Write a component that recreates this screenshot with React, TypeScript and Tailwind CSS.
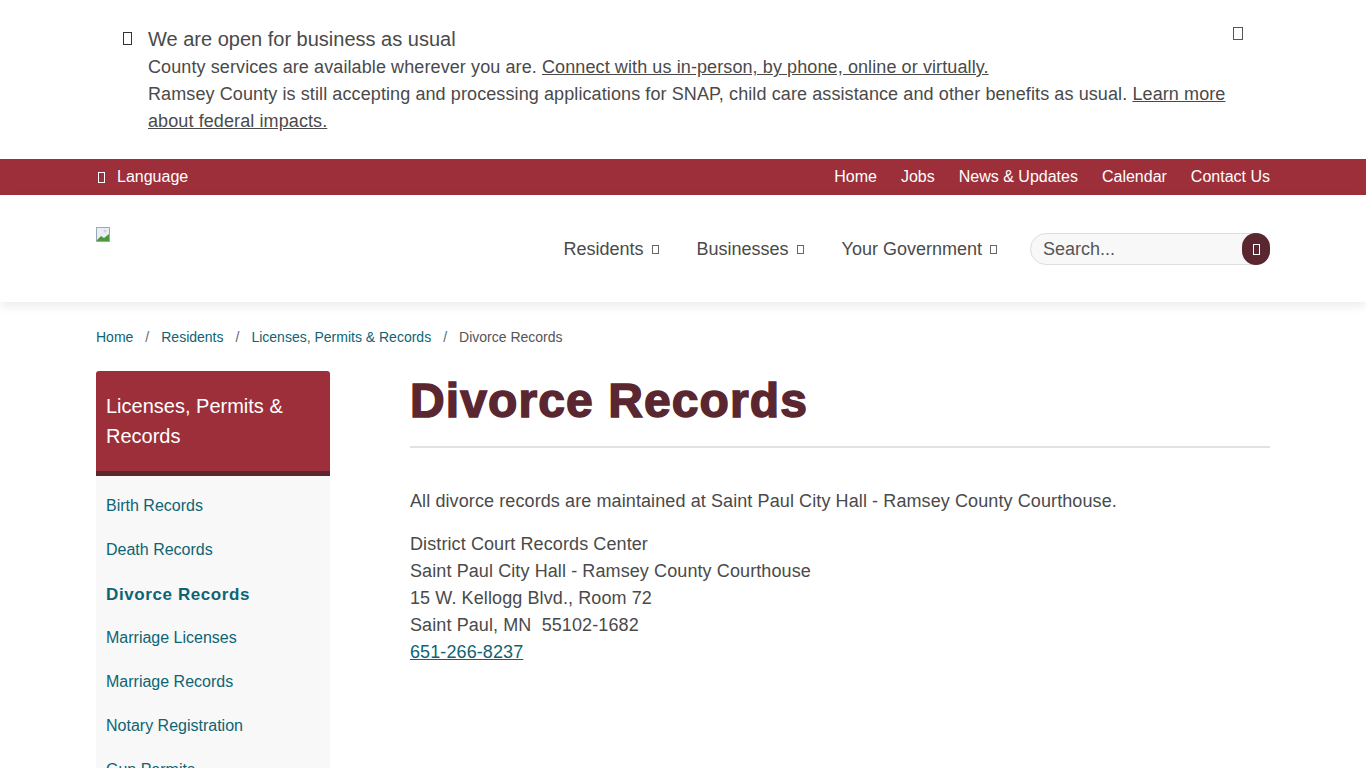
import React from "react";

const Tofu = ({ className = "" }: { className?: string }) => (
  <span className={`inline-block border border-current ${className}`} />
);

const utilLinks = ["Home", "Jobs", "News & Updates", "Calendar", "Contact Us"];
const mainNav = ["Residents", "Businesses", "Your Government"];
const sideLinks = [
  "Birth Records",
  "Death Records",
  "Divorce Records",
  "Marriage Licenses",
  "Marriage Records",
  "Notary Registration",
  "Gun Permits",
];

export default function App() {
  return (
    <div className="min-h-screen bg-white text-[#4a4a4a] font-['Liberation_Sans',Arial,sans-serif] overflow-hidden h-[768px]">
      {/* alert */}
      <div className="px-[96px] h-[159px]">
        <div className="flex pl-[27px] pt-[27px] pr-[27px]">
          <Tofu className="w-[9px] h-[13px] mt-[5px] text-[#333]" />
          <div className="ml-[16px] flex-1 tracking-[0.1px]">
            <p className="text-[20px] leading-[24px] tracking-normal">We are open for business as usual</p>
            <p className="text-[18px] leading-[27px] mt-[3px]">
              County services are available wherever you are.{" "}
              <a className="underline">Connect with us in-person, by phone, online or virtually.</a>
            </p>
            <p className="text-[18px] leading-[27px]">
              Ramsey County is still accepting and processing applications for SNAP, child care assistance and other benefits as usual.{" "}
              <a className="underline">Learn more about federal impacts.</a>
            </p>
          </div>
          <Tofu className="w-[10px] h-[13px] text-[#555] shrink-0" />
        </div>
      </div>

      {/* utility bar */}
      <div className="bg-[#9d2f3a] h-[36px] px-[96px] flex items-center justify-between text-white text-[16px]">
        <div className="flex items-center">
          <Tofu className="w-[7px] h-[11px] ml-[2px]" />
          <span className="ml-[12px]">Language</span>
        </div>
        <nav className="flex gap-[24px]">
          {utilLinks.map((l) => (
            <a key={l}>{l}</a>
          ))}
        </nav>
      </div>

      {/* header */}
      <header className="h-[107px] px-[96px] flex items-center justify-between shadow-[0_4px_10px_rgba(0,0,0,0.08)] relative">
        <div className="self-start mt-[32px]">
          <svg width="16" height="16" viewBox="0 0 16 16">
            <rect x="0.5" y="0.5" width="13" height="14" fill="#e8eef4" stroke="#9aa7b4" />
            <path d="M1 13 L5 9 L8 11 L13 7 L13 14 L1 14 Z" fill="#4a9a3a" />
            <circle cx="9" cy="4" r="1.5" fill="#c8d4e0" />
          </svg>
        </div>
        <div className="flex items-center pt-[1px]">
          <nav className="flex text-[18px] text-[#4a4a4a]">
            {mainNav.map((n) => (
              <div key={n} className="flex items-center mr-[38px] last:mr-[33px]">
                <span>{n}</span>
                <Tofu className="w-[7px] h-[9px] ml-[8px] text-[#666]" />
              </div>
            ))}
          </nav>
          <div className="relative w-[240px] h-[32px]">
            <input
              placeholder="Search..."
              className="w-full h-full rounded-full border border-[#dedede] bg-[#f8f8f8] pl-[12px] text-[18px] text-[#4a4a4a] placeholder-[#555] outline-none"
            />
            <button className="absolute right-0 top-0 w-[28px] h-[32px] rounded-full bg-[#5a2630] flex items-center justify-center">
              <Tofu className="w-[7px] h-[11px] text-white" />
            </button>
          </div>
        </div>
      </header>

      {/* breadcrumb */}
      <div className="px-[96px] pt-[26px] text-[14px] leading-[18px] flex items-center">
        <a className="text-[#0d6474]">Home</a>
        <span className="mx-[12px] text-[#666]">/</span>
        <a className="text-[#0d6474]">Residents</a>
        <span className="mx-[12px] text-[#666]">/</span>
        <a className="text-[#0d6474]">Licenses, Permits &amp; Records</a>
        <span className="mx-[12px] text-[#666]">/</span>
        <span className="text-[#555]">Divorce Records</span>
      </div>

      {/* body */}
      <div className="px-[96px] pt-[25px] flex">
        <aside className="w-[234px] shrink-0">
          <div className="bg-[#9d2f3a] rounded-t-[3px] border-b-[5px] border-[#5a2630] h-[105px] px-[10px] pt-[20px] text-white text-[20px] leading-[30px]">
            Licenses, Permits &amp; Records
          </div>
          <ul className="bg-[#f8f8f8] pt-[20px] pb-[20px]">
            {sideLinks.map((s) => (
              <li
                key={s}
                className={`px-[10px] h-[44px] leading-[20px] text-[#0d6474] ${
                  s === "Divorce Records" ? "font-bold text-[17px] tracking-[0.6px] pt-[1px] text-[#0b5f6e]" : "text-[16px]"
                }`}
              >
                {s}
              </li>
            ))}
          </ul>
        </aside>

        <main className="ml-[80px] flex-1">
          <h1 className="text-[48px] leading-[60px] font-black text-[#5a2630] tracking-[1.1px] [-webkit-text-stroke:1.5px_#5a2630]">
            Divorce Records
          </h1>
          <div className="mt-[15px] h-[2px] bg-[#e2e2e2]" />
          <div className="tracking-[0.1px]">
            <p className="mt-[40px] text-[18px] leading-[27px]">
              All divorce records are maintained at Saint Paul City Hall - Ramsey County Courthouse.
            </p>
            <p className="mt-[16px] text-[18px] leading-[27px]">
              District Court Records Center
              <br />
              Saint Paul City Hall - Ramsey County Courthouse
              <br />
              15 W. Kellogg Blvd., Room 72
              <br />
              Saint Paul, MN&nbsp; 55102-1682
              <br />
              <a className="text-[#0d6474] underline">651-266-8237</a>
            </p>
          </div>
        </main>
      </div>
    </div>
  );
}
